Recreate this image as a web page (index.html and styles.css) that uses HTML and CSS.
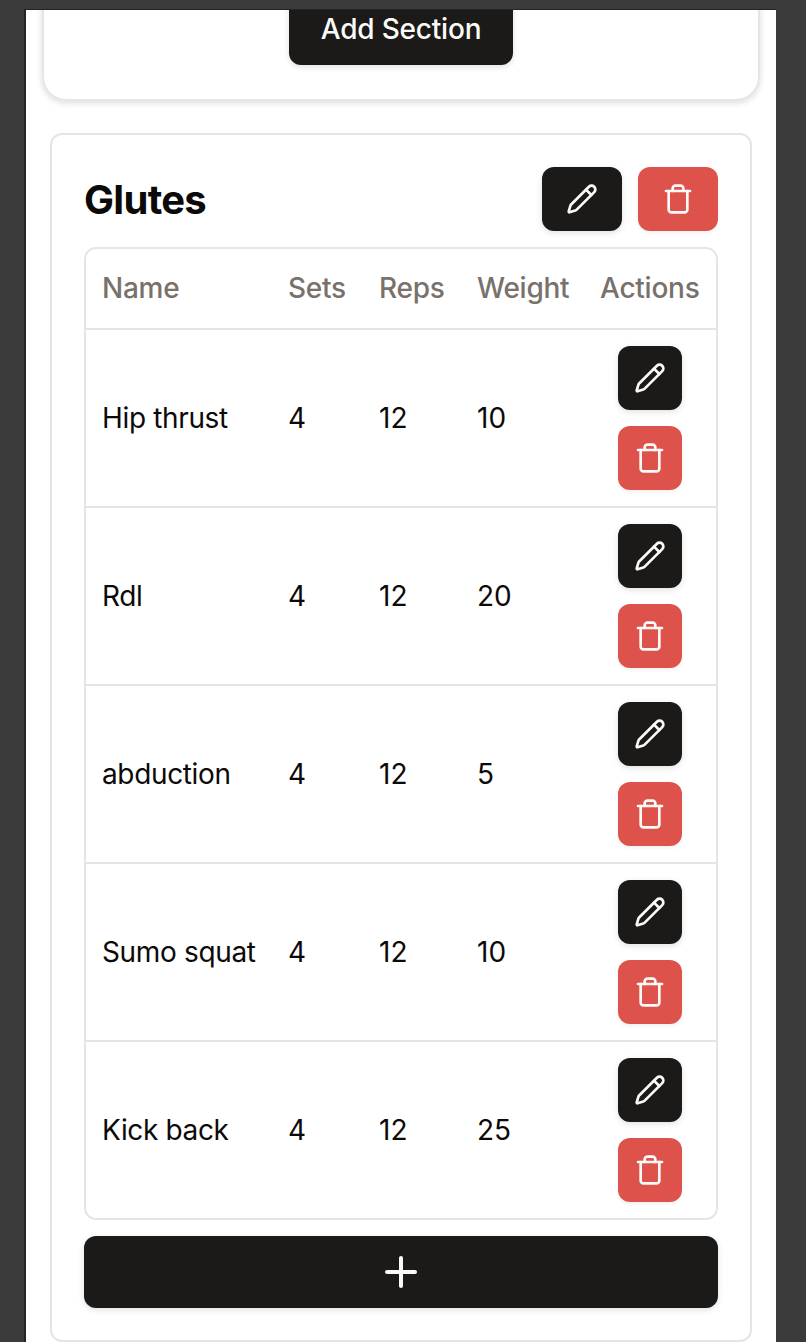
FILE: index.html
```
<!DOCTYPE html>
<html lang="en">
<head>
    <meta charset="UTF-8">
    <meta name="viewport" content="width=device-width, initial-scale=1.0">
    <title>Workout</title>
    <link rel="stylesheet" href="styles.css">
</head>
<body>
    <svg class="sprite">
        <symbol id="pencil" viewBox="0 0 24 24">
            <path d="M21.174 6.812a1 1 0 0 0-3.986-3.987L3.842 16.174a2 2 0 0 0-.5.83l-1.321 4.352a.5.5 0 0 0 .623.622l4.353-1.32a2 2 0 0 0 .83-.497z"/>
            <path d="m15 5 4 4"/>
        </symbol>
        <symbol id="trash" viewBox="0 0 24 24">
            <path d="M3 6h18"/>
            <path d="M19 6v14c0 1-1 2-2 2H7c-1 0-2-1-2-2V6"/>
            <path d="M8 6V4c0-1 1-2 2-2h4c1 0 2 1 2 2v2"/>
        </symbol>
        <symbol id="plus" viewBox="0 0 24 24">
            <path d="M5 12h14"/>
            <path d="M12 5v14"/>
        </symbol>
    </svg>

    <main class="page">
        <div class="addCard">
            <button class="btn addSection">Add Section</button>
        </div>

        <section class="section">
            <div class="sectionHeader">
                <h2>Glutes</h2>
                <div class="sectionButtons">
                    <button class="btn" aria-label="Edit"><svg class="icon"><use href="#pencil"/></svg></button>
                    <button class="btn delete" aria-label="Delete"><svg class="icon"><use href="#trash"/></svg></button>
                </div>
            </div>

            <div class="tableBox">
                <table>
                    <colgroup>
                        <col class="colName">
                        <col class="colSets">
                        <col class="colReps">
                        <col class="colWeight">
                        <col>
                    </colgroup>
                    <thead>
                        <tr>
                            <th>Name</th>
                            <th>Sets</th>
                            <th>Reps</th>
                            <th>Weight</th>
                            <th>Actions</th>
                        </tr>
                    </thead>
                    <tbody>
                        <tr>
                            <td class="name">Hip thrust</td>
                            <td>4</td>
                            <td>12</td>
                            <td>10</td>
                            <td>
                                <div class="actions">
                                    <button class="btn" aria-label="Edit"><svg class="icon"><use href="#pencil"/></svg></button>
                                    <button class="btn delete" aria-label="Delete"><svg class="icon"><use href="#trash"/></svg></button>
                                </div>
                            </td>
                        </tr>
                        <tr>
                            <td class="name">Rdl</td>
                            <td>4</td>
                            <td>12</td>
                            <td>20</td>
                            <td>
                                <div class="actions">
                                    <button class="btn" aria-label="Edit"><svg class="icon"><use href="#pencil"/></svg></button>
                                    <button class="btn delete" aria-label="Delete"><svg class="icon"><use href="#trash"/></svg></button>
                                </div>
                            </td>
                        </tr>
                        <tr>
                            <td class="name">abduction</td>
                            <td>4</td>
                            <td>12</td>
                            <td>5</td>
                            <td>
                                <div class="actions">
                                    <button class="btn" aria-label="Edit"><svg class="icon"><use href="#pencil"/></svg></button>
                                    <button class="btn delete" aria-label="Delete"><svg class="icon"><use href="#trash"/></svg></button>
                                </div>
                            </td>
                        </tr>
                        <tr>
                            <td class="name">Sumo squat</td>
                            <td>4</td>
                            <td>12</td>
                            <td>10</td>
                            <td>
                                <div class="actions">
                                    <button class="btn" aria-label="Edit"><svg class="icon"><use href="#pencil"/></svg></button>
                                    <button class="btn delete" aria-label="Delete"><svg class="icon"><use href="#trash"/></svg></button>
                                </div>
                            </td>
                        </tr>
                        <tr>
                            <td class="name">Kick back</td>
                            <td>4</td>
                            <td>12</td>
                            <td>25</td>
                            <td>
                                <div class="actions">
                                    <button class="btn" aria-label="Edit"><svg class="icon"><use href="#pencil"/></svg></button>
                                    <button class="btn delete" aria-label="Delete"><svg class="icon"><use href="#trash"/></svg></button>
                                </div>
                            </td>
                        </tr>
                    </tbody>
                </table>
            </div>

            <button class="btn addExercise" aria-label="Add exercise"><svg class="icon large"><use href="#plus"/></svg></button>
        </section>
    </main>
</body>
</html>
```
FILE: styles.css
```
* {
    box-sizing: border-box;
}

body {
    margin: 0;
    height: 1342px;
    padding: 9px 30px 0 24px;
    overflow: hidden;
    background-color: #3b3b3b;
    color: #0c0a09;
    font-family: Inter, "Liberation Sans", sans-serif;
    font-size: 28px;
    line-height: 40px;
}

.sprite {
    display: none;
}

.page {
    height: 1333px;
    border-top: 1px solid #242424;
    border-left: 2px solid #242424;
    background-color: #fff;
    overflow: hidden;
}

.addCard {
    display: flex;
    justify-content: center;
    height: 107px;
    margin: -16px 16px 32px;
    border: 2px solid #e5e5e5;
    border-top: none;
    border-radius: 0 0 24px 24px;
    box-shadow: 0 2px 6px rgba(0, 0, 0, 0.14);
}

.btn {
    display: flex;
    align-items: center;
    justify-content: center;
    width: 64px;
    height: 64px;
    padding: 0;
    border: none;
    border-radius: 12px;
    background-color: #1b1a18;
    color: #fafaf9;
    font: inherit;
    font-weight: 500;
    letter-spacing: -0.2px;
    box-shadow: 0 2px 6px rgba(0, 0, 0, 0.12);
}

.delete {
    background-color: #de524c;
    box-shadow: 0 2px 4px rgba(0, 0, 0, 0.06);
}

.addSection {
    width: 224px;
    height: 71px;
    padding-bottom: 1px;
}

.icon {
    width: 32px;
    height: 32px;
    fill: none;
    stroke: currentColor;
    stroke-width: 2;
    stroke-linecap: round;
    stroke-linejoin: round;
}

.icon.large {
    width: 48px;
    height: 48px;
}

.section {
    height: 1209px;
    margin: 0 24px;
    padding: 32px;
    border: 2px solid #e5e5e5;
    border-radius: 12px;
}

.sectionHeader {
    display: flex;
    align-items: center;
    justify-content: space-between;
    margin-bottom: 16px;
}

.sectionHeader h2 {
    margin: 0;
    padding-top: 2px;
    font-size: 40px;
    font-weight: 700;
    letter-spacing: -0.7px;
}

.sectionButtons {
    display: flex;
    gap: 16px;
}

.sectionButtons .btn {
    width: 80px;
}

.tableBox {
    border: 2px solid #e5e5e5;
    border-radius: 12px;
}

table {
    width: 100%;
    table-layout: fixed;
    border-collapse: separate;
    border-spacing: 0;
}

.colName {
    width: 186px;
}

.colSets {
    width: 91px;
}

.colReps {
    width: 98px;
}

.colWeight {
    width: 123px;
}

th, td {
    padding: 0 16px;
    border-bottom: 2px solid #e5e5e5;
    text-align: left;
    white-space: nowrap;
}

th {
    height: 81px;
    padding-bottom: 1px;
    color: #78716c;
    font-weight: 500;
    letter-spacing: -0.25px;
}

td {
    height: 178px;
}

.name {
    letter-spacing: -0.35px;
}

tbody tr:last-child td {
    height: 176px;
    border-bottom: none;
}

.actions {
    display: flex;
    flex-direction: column;
    align-items: center;
    gap: 16px;
}

.addExercise {
    width: 100%;
    height: 72px;
    margin-top: 16px;
}
```
